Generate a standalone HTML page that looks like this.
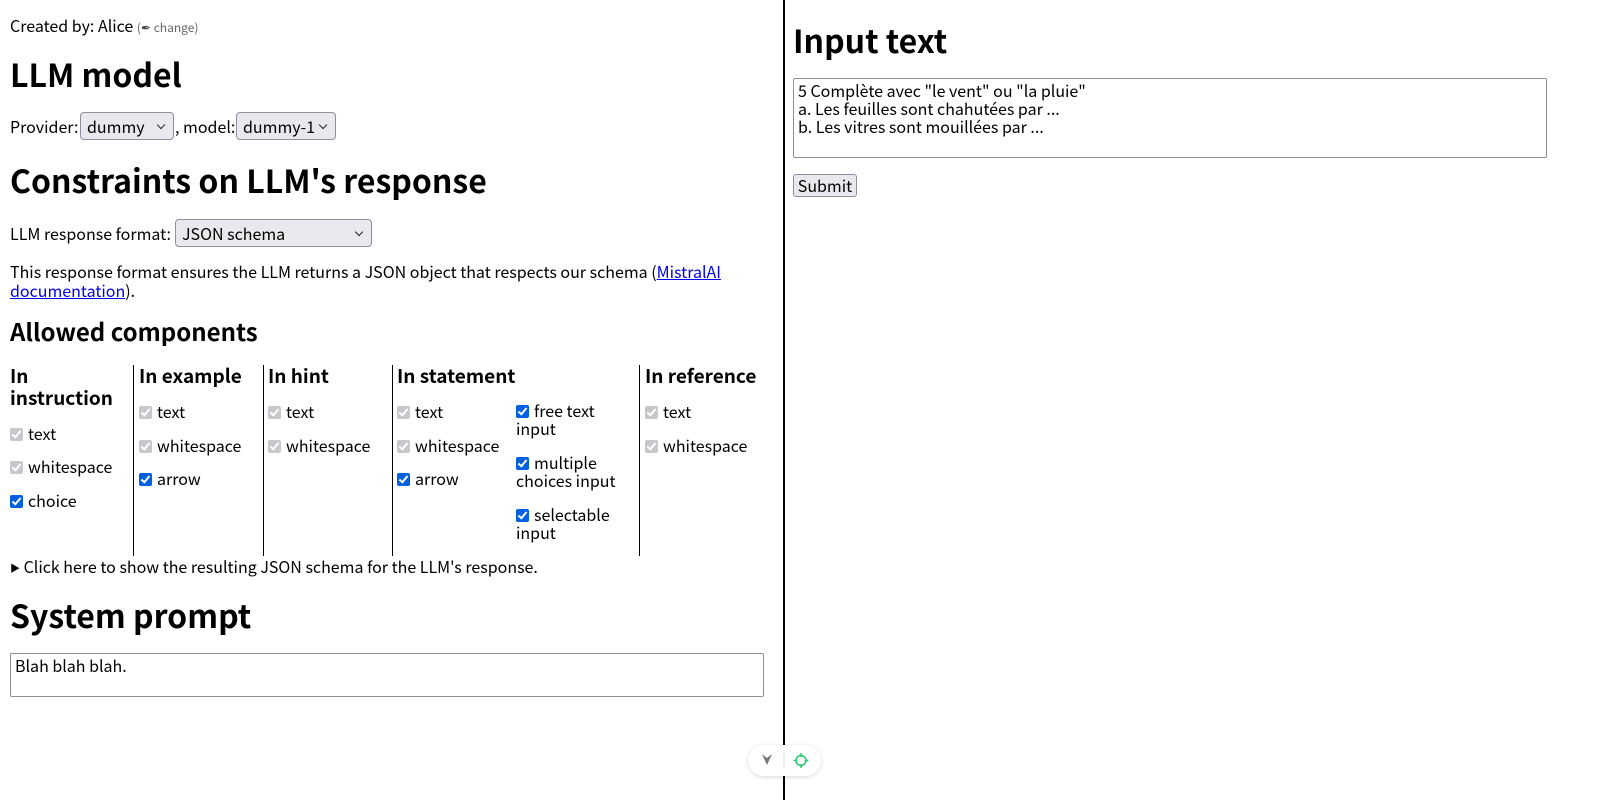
<!DOCTYPE html>
<html><head><meta charset="utf-8"><style>
*{box-sizing:border-box}
body{margin:0;width:1600px;height:800px;background:#fff;font-family:"Noto Sans CJK JP","DejaVu Sans",sans-serif;font-size:16px;color:#000;position:relative;overflow:hidden}
.a{position:absolute;white-space:nowrap;line-height:20px}
h1,h2{margin:0;position:absolute;white-space:nowrap;font-weight:700}
h1{font-size:32px;line-height:40px}
h2{font-size:24px;line-height:30px}
.h3{font-size:19px;font-weight:700;line-height:22px}
.sel{position:absolute;border:1px solid #8f8f9d;border-radius:4px;background:#e9e9ed;height:28px;padding:0 6px;line-height:26px}
.sel:after{content:"";position:absolute;right:9px;top:9px;width:5px;height:5px;border-right:1.5px solid #222;border-bottom:1.5px solid #222;transform:rotate(45deg)}
.cb{display:inline-block;width:13px;height:13px;border-radius:2px;vertical-align:-1px;margin-right:5px;position:relative;background:#0060df}
.cb.g{background:#c8c8cc}
.cb:after{content:"";position:absolute;left:4px;top:1px;width:3px;height:7px;border-right:2px solid #fff;border-bottom:2px solid #fff;transform:rotate(40deg)}
.vl{position:absolute;top:365px;height:191px;width:1px;background:#000}
.ta{position:absolute;border:1px solid #8f8f9d;border-radius:2px;padding:2px 4px;line-height:18px;white-space:pre}
</style></head><body>
<div class="a" style="left:10px;top:15px">Created by: Alice <span style="font-size:12px;color:#666">(<span style="color:#444">✒</span> change)</span></div>
<h1 style="left:10px;top:54px">LLM model</h1>
<div class="a" style="left:10px;top:116px">Provider:</div>
<div class="sel" style="left:80px;top:112px;width:94px">dummy</div>
<div class="a" style="left:175px;top:116px">, model:</div>
<div class="sel" style="left:236px;top:112px;width:100px">dummy-1</div>
<h1 style="left:10px;top:160px">Constraints on LLM's response</h1>
<div class="a" style="left:10px;top:223px">LLM response format:</div>
<div class="sel" style="left:175px;top:219px;width:197px">JSON schema</div>
<div class="a" style="left:10px;top:262px;line-height:19px">This response format ensures the LLM returns a JSON object that respects our schema (<u style="color:#00e">MistralAI</u><br><u style="color:#00e">documentation</u>).</div>
<h2 style="left:10px;top:316px">Allowed components</h2>
<div class="vl" style="left:133px"></div><div class="vl" style="left:263px"></div><div class="vl" style="left:392px"></div><div class="vl" style="left:639px"></div>
<div class="a h3" style="left:10px;top:365px">In<br>instruction</div>
<div class="a" style="left:10px;top:423px"><span class="cb g"></span>text</div>
<div class="a" style="left:10px;top:456px"><span class="cb g"></span>whitespace</div>
<div class="a" style="left:10px;top:490px"><span class="cb"></span>choice</div>
<div class="a h3" style="left:139px;top:365px">In example</div>
<div class="a" style="left:139px;top:401px"><span class="cb g"></span>text</div>
<div class="a" style="left:139px;top:435px"><span class="cb g"></span>whitespace</div>
<div class="a" style="left:139px;top:468px"><span class="cb"></span>arrow</div>
<div class="a h3" style="left:268px;top:365px">In hint</div>
<div class="a" style="left:268px;top:401px"><span class="cb g"></span>text</div>
<div class="a" style="left:268px;top:435px"><span class="cb g"></span>whitespace</div>
<div class="a h3" style="left:397px;top:365px">In statement</div>
<div class="a" style="left:397px;top:401px"><span class="cb g"></span>text</div>
<div class="a" style="left:397px;top:435px"><span class="cb g"></span>whitespace</div>
<div class="a" style="left:397px;top:468px"><span class="cb"></span>arrow</div>
<div class="a" style="left:516px;top:401px;line-height:18px"><span class="cb"></span>free text<br>input</div>
<div class="a" style="left:516px;top:453px;line-height:18px"><span class="cb"></span>multiple<br>choices input</div>
<div class="a" style="left:516px;top:505px;line-height:18px"><span class="cb"></span>selectable<br>input</div>
<div class="a h3" style="left:645px;top:365px">In reference</div>
<div class="a" style="left:645px;top:401px"><span class="cb g"></span>text</div>
<div class="a" style="left:645px;top:435px"><span class="cb g"></span>whitespace</div>
<div class="a" style="left:10px;top:556px"><span style="font-size:10px;vertical-align:1px">▶</span> Click here to show the resulting JSON schema for the LLM's response.</div>
<h1 style="left:10px;top:595px">System prompt</h1>
<div class="ta" style="left:10px;top:653px;width:754px;height:44px">Blah blah blah.</div>
<div style="position:absolute;left:783px;top:0;width:2px;height:800px;background:#000"></div>
<h1 style="left:793px;top:20px">Input text</h1>
<div class="ta" style="left:793px;top:78px;width:754px;height:80px">5 Complète avec "le vent" ou "la pluie"
a. Les feuilles sont chahutées par ...
b. Les vitres sont mouillées par ...</div>
<div style="position:absolute;left:793px;top:174px;width:64px;height:23px;border:1px solid #8f8f9d;border-radius:3px;background:#e9e9ed;text-align:center;line-height:21px">Submit</div>
<div style="position:absolute;left:748px;top:745px;width:73px;height:31px;border-radius:16px;background:#fff;box-shadow:0 1px 4px rgba(0,0,0,.15)">
<svg width="73" height="31"><path d="M760 754" fill="none"/><path d="M12 9 L17 20 L22 9 L17 13 Z" fill="#777" transform="translate(2,0)"/><line x1="36" y1="7" x2="36" y2="24" stroke="#ddd"/><circle cx="53" cy="15.5" r="5" fill="none" stroke="#2ecc71" stroke-width="1.5"/><path d="M53 8v4M53 19v4M45.5 15.5h4M56.5 15.5h4" stroke="#2ecc71" stroke-width="1.5"/></svg></div>
</body></html>
